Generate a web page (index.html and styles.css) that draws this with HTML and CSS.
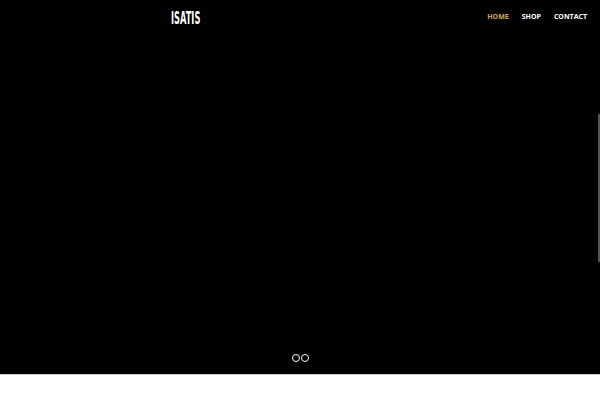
FILE: index.html
```html
<!DOCTYPE html>
<html>
<head>
<meta charset="utf-8">
<link rel="stylesheet" href="styles.css">
</head>
<body>
<div class="hero">
  <header class="header">
    <div class="logo">ISATIS</div>
    <nav class="nav">
      <a class="nav-link active">HOME</a>
      <a class="nav-link">SHOP</a>
      <a class="nav-link">CONTACT</a>
    </nav>
  </header>
  <div class="spacer"></div>
  <div class="dots">
    <span class="dot"></span>
    <span class="dot"></span>
  </div>
  <div class="edge"></div>
</div>
<div class="below"></div>
</body>
</html>
```
FILE: styles.css
```css
html, body {
  margin: 0;
  padding: 0;
  background: #ffffff;
}
.hero {
  position: relative;
  height: 374px;
  background: #000000;
  border-bottom: 1px solid #cfcfcf;
  display: flex;
  flex-direction: column;
}
.header {
  display: flex;
  align-items: flex-start;
  justify-content: space-between;
  padding: 0 13px 0 171px;
}
.logo {
  font-family: "DejaVu Sans", sans-serif;
  font-stretch: condensed;
  font-weight: 700;
  color: #ffffff;
  font-size: 18px;
  line-height: 18px;
  margin-top: 9px;
  transform: scaleX(0.51);
  transform-origin: left center;
}
.nav {
  display: flex;
  gap: 13px;
  margin-top: 12px;
  margin-right: 0;
}
.nav-link {
  font-family: "Open Sans", "DejaVu Sans", sans-serif;
  font-weight: 700;
  font-size: 7px;
  line-height: 9px;
  letter-spacing: 0;
  color: #ffffff;
}
.nav-link.active {
  color: #d2a564;
}
.spacer {
  flex: 1;
}
.dots {
  display: flex;
  justify-content: center;
  gap: 1px;
  padding-bottom: 12px;
}
.dot {
  width: 6px;
  height: 6px;
  border: 1.5px solid #ffffff;
  border-radius: 50%;
}
.edge {
  position: absolute;
  right: 0;
  top: 114px;
  width: 2px;
  height: 148px;
  background: #555555;
}
.below {
  height: 25px;
}
```
